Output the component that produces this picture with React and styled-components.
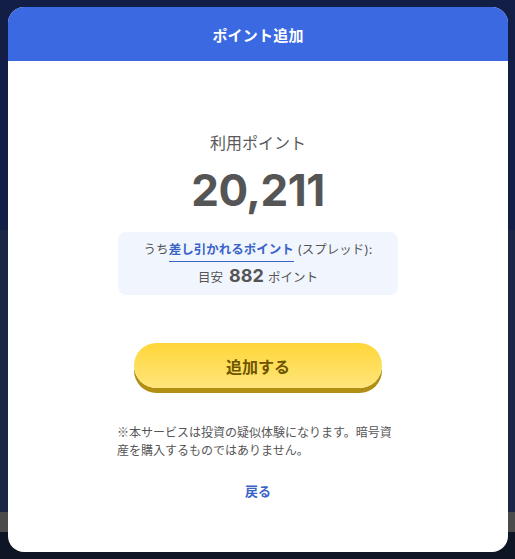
import React from "react";
import styled, { createGlobalStyle } from "styled-components";

const Global = createGlobalStyle`
  html, body { margin: 0; padding: 0; }
  body {
    width: 515px;
    height: 559px;
    overflow: hidden;
    background: #0e1524;
    font-family: "Inter", "Noto Sans CJK JP", sans-serif;
  }
`;

const Backdrop = styled.div`
  position: relative;
  width: 515px;
  height: 559px;
  display: flex;
  flex-direction: column;
`;

const Band = styled.div`
  height: ${(p) => p.$h}px;
  background: ${(p) => p.$c};
  flex: ${(p) => (p.$grow ? 1 : "none")};
`;

const Modal = styled.div`
  position: absolute;
  top: 7px;
  left: 8px;
  width: 500px;
  height: 545px;
  background: #ffffff;
  border-radius: 16px;
  overflow: hidden;
  display: flex;
  flex-direction: column;
`;

const Header = styled.div`
  height: 54px;
  background: #3b69e2;
  display: flex;
  align-items: center;
  justify-content: center;
  color: #ffffff;
  font-size: 15px;
  font-weight: 700;
  letter-spacing: 0.2px;
`;

const Body = styled.div`
  display: flex;
  flex-direction: column;
  align-items: center;
  padding-top: 71px;
  color: #555555;
`;

const Label = styled.div`
  font-size: 16px;
  line-height: 22px;
  color: #5a5a5a;
`;

const BigNumber = styled.div`
  margin-top: 8px;
  font-size: 44px;
  font-weight: 700;
  line-height: 56px;
  color: #555555;
  letter-spacing: -0.5px;
`;

const InfoBox = styled.div`
  margin-top: 14px;
  width: 280px;
  height: 63px;
  box-sizing: border-box;
  background: #f1f6fe;
  border-radius: 8px;
  display: flex;
  flex-direction: column;
  align-items: center;
  justify-content: center;
  gap: 3px;
  font-size: 12.5px;
  color: #555555;
`;

const InfoLine = styled.div`
  display: flex;
  align-items: baseline;
  line-height: 22px;
`;

const Link = styled.span`
  color: #3a63c8;
  font-weight: 700;
  border-bottom: 1px solid #3a63c8;
  line-height: 19px;
  padding-bottom: 2px;
`;

const Amount = styled.span`
  font-size: 18px;
  font-weight: 700;
  margin: 0 4px 0 6px;
  color: #555555;
`;

const ActionButton = styled.button`
  margin-top: 48px;
  width: 248px;
  height: 45px;
  border: none;
  border-radius: 23px;
  background: linear-gradient(180deg, #ffd638 0%, #ffe57c 100%);
  box-shadow: 0 5px 0 #b18f12;
  color: #6e5500;
  font-family: inherit;
  font-size: 16px;
  font-weight: 700;
  cursor: pointer;
`;

const Note = styled.p`
  margin: 35px 0 0;
  width: 282px;
  font-family: "Noto Sans CJK JP", sans-serif;
  font-size: 12px;
  line-height: 18px;
  color: #555555;
`;

const BackLink = styled.div`
  margin-top: 22px;
  color: #3a63c8;
  font-size: 13px;
  font-weight: 700;
`;

export default function App() {
  return (
    <>
      <Global />
      <Backdrop>
        <Band $h={230} $c="#121e45" />
        <Band $h={282} $c="#1b2545" />
        <Band $h={20} $c="#4b4b4b" />
        <Band $grow $c="#0e1524" />
        <Modal>
          <Header>ポイント追加</Header>
          <Body>
            <Label>利用ポイント</Label>
            <BigNumber>20,211</BigNumber>
            <InfoBox>
              <InfoLine>
                うち<Link>差し引かれるポイント</Link>&nbsp;(スプレッド):
              </InfoLine>
              <InfoLine>
                目安<Amount>882</Amount>ポイント
              </InfoLine>
            </InfoBox>
            <ActionButton>追加する</ActionButton>
            <Note>
              ※本サービスは投資の疑似体験になります。暗号資産を購入するものではありません。
            </Note>
            <BackLink>戻る</BackLink>
          </Body>
        </Modal>
      </Backdrop>
    </>
  );
}
